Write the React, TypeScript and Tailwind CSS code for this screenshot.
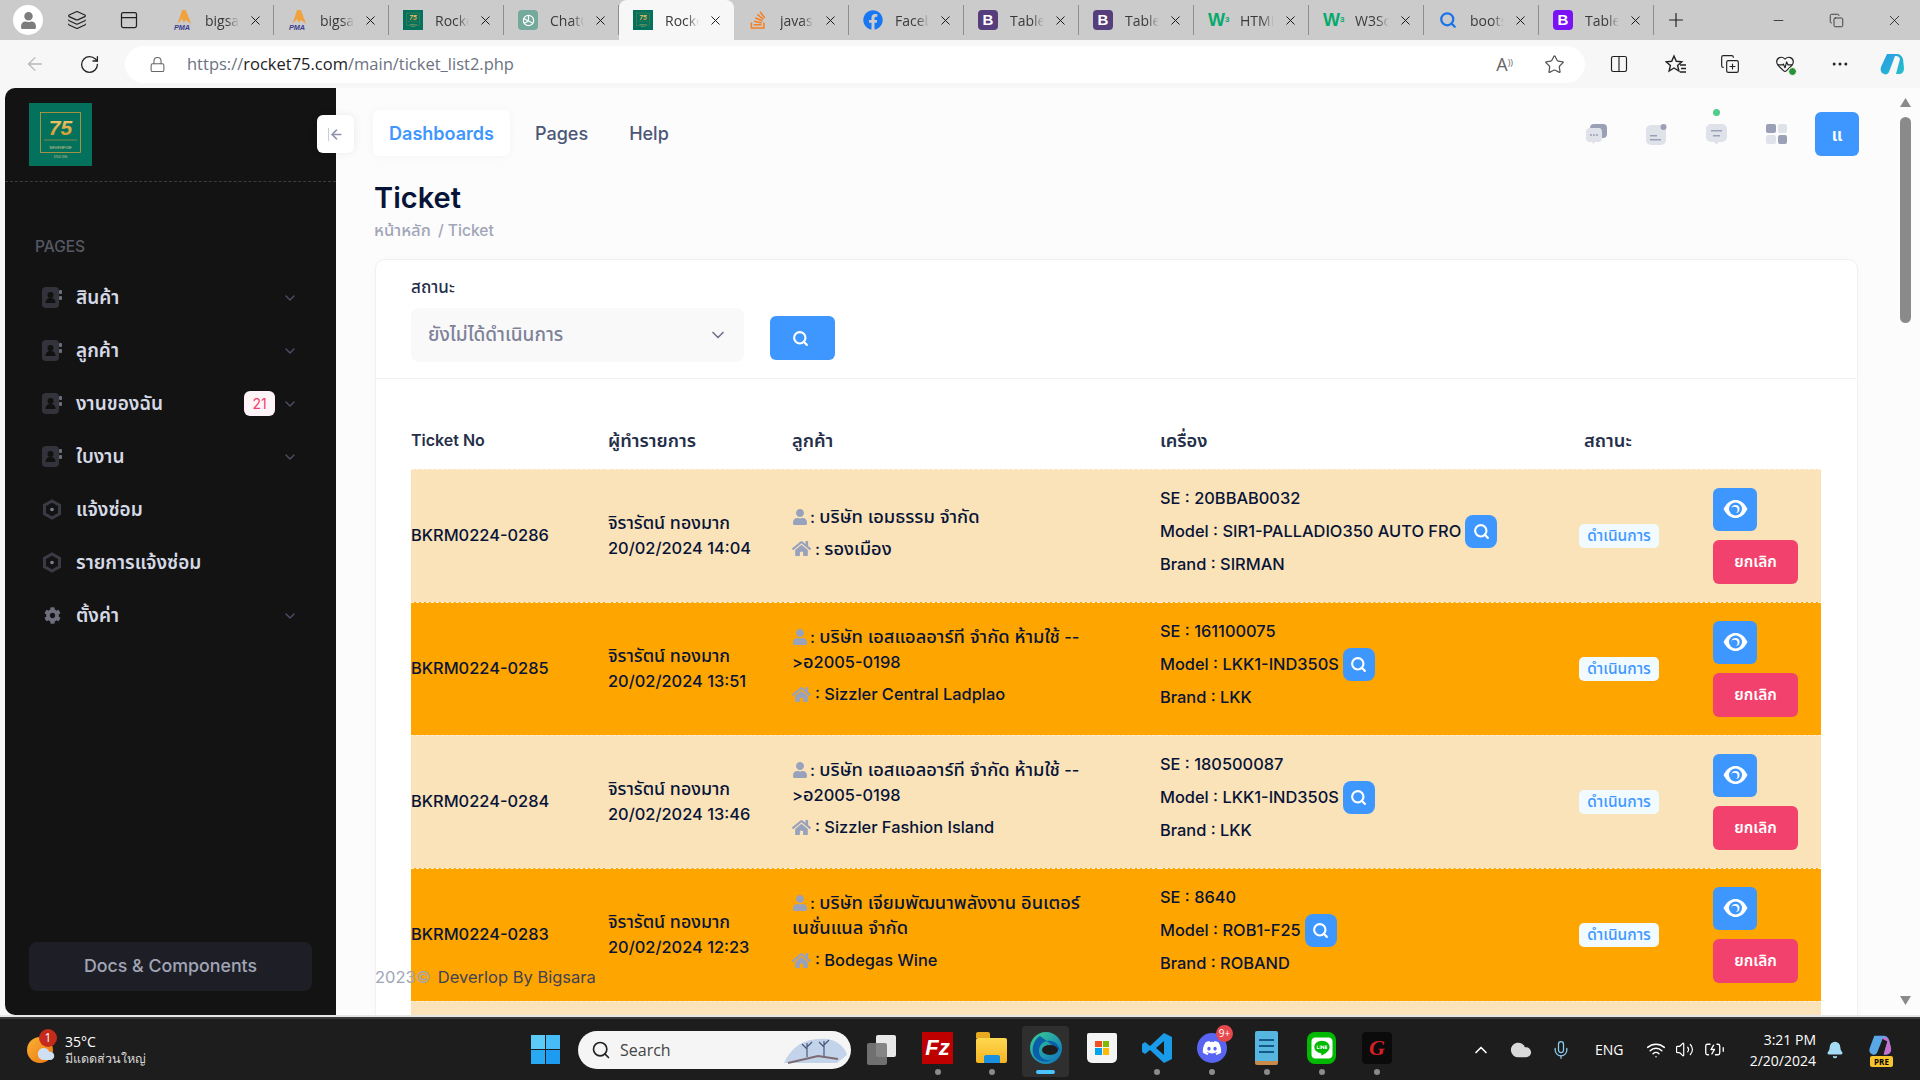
import React from "react";
import { ArrowLeft, RotateCw, Lock, Star, Columns2, Copy, CopyPlus, X, Plus, Minus, MoreHorizontal, ChevronDown, Search, ChevronUp, Mic, Wifi, Volume2, BatteryCharging, Bell, Cloud, HeartPulse, Layers, PanelTop } from "lucide-react";
import { FaFacebook, FaDiscord, FaLine, FaStackOverflow, FaUser, FaHome, FaCog } from "react-icons/fa";

const thai = "font-['Inter','Noto_Sans_Thai','Noto_Sans','DejaVu_Sans',sans-serif]";

function Pma() {
  return (
    <svg width="22" height="24" viewBox="0 0 22 24">
      <path d="M10 1 L14 1 L20 16 L14 12 L12 15 L10 11 L5 16 Z" fill="#f0a23c" />
      <text x="1" y="23" fontSize="8" fontStyle="italic" fontWeight="700" fill="#3a3f8f" fontFamily="Liberation Sans">PMA</text>
    </svg>
  );
}
function Logo75({ size }: { size: number }) {
  return (
    <svg width={size} height={size} viewBox="0 0 63 63" className="shrink-0">
      <defs>
        <linearGradient id="gold" x1="0" y1="0" x2="0" y2="1">
          <stop offset="0" stopColor="#f5d27a" />
          <stop offset="1" stopColor="#d08f25" />
        </linearGradient>
      </defs>
      <rect width="63" height="63" fill="#04715c" />
      <rect x="11.500" y="9.500" width="40" height="40" fill="none" stroke="#c99a3e" strokeWidth="0.8" />
      <text x="31.500" y="32" textAnchor="middle" fontSize="21" fontStyle="italic" fontWeight="700" fill="url(#gold)" fontFamily="Liberation Sans">75</text>
      <line x1="15" y1="37" x2="48" y2="37" stroke="#c99a3e" strokeWidth="0.6" />
      <text x="31.500" y="46" textAnchor="middle" fontSize="4" fill="#d8c88f" fontFamily="Liberation Sans">SEVENFIVE</text>
      <text x="31.500" y="55" textAnchor="middle" fontSize="2.600" fill="#d8c88f" fontFamily="Liberation Sans">STUD 1990</text>
    </svg>
  );
}
function BootB({ color }: { color: string }) {
  return (
    <span className="w-[20px] h-[20px] rounded-[4px] flex items-center justify-center text-white text-[15px] font-bold font-['Liberation_Sans']" style={{ background: color }}>B</span>
  );
}
function W3() {
  return <span className="text-[#04aa6d] text-[18px] font-bold font-['Liberation_Sans'] w-[20px] leading-none">W<sup className="text-[8px]">3</sup></span>;
}
function ChatLogo() {
  return (
    <span className="w-[20px] h-[20px] rounded-[4px] bg-[#74aa9c] flex items-center justify-center">
      <svg width="15" height="15" viewBox="0 0 16 16" fill="none" stroke="#fff" strokeWidth="1.300">
        <circle cx="8" cy="8" r="5.500" />
        <path d="M8 2.500v6l4.500 2.500M8 8.500l-4.500 2.500M3 6l5 2.500" />
      </svg>
    </span>
  );
}

type TabDef = { icon: React.ReactNode; label: string; active?: boolean };
const tabs: TabDef[] = [
  { icon: <Pma />, label: "bigsa" },
  { icon: <Pma />, label: "bigsa" },
  { icon: <Logo75 size={20} />, label: "Rocke" },
  { icon: <ChatLogo />, label: "ChatG" },
  { icon: <Logo75 size={20} />, label: "Rocke", active: true },
  { icon: <FaStackOverflow size={20} color="#f48024" />, label: "javas" },
  { icon: <FaFacebook size={20} color="#1877f2" />, label: "Faceb" },
  { icon: <BootB color="#563d7c" />, label: "Table" },
  { icon: <BootB color="#563d7c" />, label: "Table" },
  { icon: <W3 />, label: "HTML" },
  { icon: <W3 />, label: "W3Sc" },
  { icon: <Search size={18} color="#1a73e8" strokeWidth={3} />, label: "boots" },
  { icon: <BootB color="#7a12f5" />, label: "Table" },
];

function TabBar() {
  return (
    <div className="h-[40px] bg-[#cbcbcb] flex items-center font-['Open_Sans',sans-serif] text-[14px] text-[#3a3a3a] shrink-0">
      <div className="w-[159px] flex items-center shrink-0 pl-[13px]">
        <span className="w-[30px] h-[30px] rounded-full bg-white flex items-center justify-center">
          <FaUser size={17} color="#7d7d7d" />
        </span>
        <Layers size={20} strokeWidth={1.400} color="#222" className="ml-[24px]" />
        <PanelTop size={20} strokeWidth={1.500} color="#222" className="ml-[32px]" />
      </div>
      {tabs.map((t, i) => (
        <div
          key={i}
          className={
            t.active
              ? "w-[115px] h-[40px] bg-[#f7f7f7] rounded-t-[8px] flex items-center pl-[14px] shrink-0"
              : "w-[115px] h-[30px] border-r border-[#8e8e8e] flex items-center pl-[14px] shrink-0"
          }
        >
          <span className="w-[20px] h-[24px] flex items-center justify-center shrink-0">{t.icon}</span>
          <span className="ml-[12px] w-[34px] overflow-hidden whitespace-nowrap [mask-image:linear-gradient(to_right,black_65%,transparent)]">{t.label}</span>
          <X size={15} color="#111" strokeWidth={1.500} className="ml-[9px] shrink-0" />
        </div>
      ))}
      <Plus size={22} color="#222" strokeWidth={1.300} className="ml-[11px]" />
      <div className="ml-auto flex items-center pr-[17px]">
        <Minus size={15} color="#222" strokeWidth={1.300} />
        <Copy size={15} color="#222" strokeWidth={1.300} className="ml-[43px]" />
        <X size={17} color="#222" strokeWidth={1.200} className="ml-[42px]" />
      </div>
    </div>
  );
}

function Toolbar() {
  return (
    <div className="h-[48px] bg-[#f7f7f7] flex items-center shrink-0 text-[#222]">
      <ArrowLeft size={22} color="#b8b8b8" strokeWidth={1.400} className="ml-[24px]" />
      <RotateCw size={21} strokeWidth={1.500} className="ml-[33px]" />
      <div className="ml-[25px] w-[1460px] h-[37px] rounded-full bg-white flex items-center pl-[24px] pr-[20px]">
        <Lock size={17} color="#666" strokeWidth={1.500} />
        <span className="ml-[21px] font-['Open_Sans',sans-serif] text-[16.500px] text-[#6b7280]">
          https://<span className="text-[#222]">rocket75.com</span>/main/ticket_list2.php
        </span>
        <span className="ml-auto text-[18px] text-[#666] font-['Open_Sans'] mr-[31px]">A<sup className="text-[9px]">))</sup></span>
        <Star size={21} color="#555" strokeWidth={1.400} />
      </div>
      <Columns2 size={20} strokeWidth={1.400} className="ml-[24px]" />
      <svg width="22" height="21" viewBox="0 0 22 21" fill="none" stroke="#222" strokeWidth="1.400" className="ml-[36px]">
        <path d="M9 2l2.300 5.300 5.500.5-4.200 3.700 1.300 5.500L9 14l-4.900 3 1.300-5.500L1.200 7.800l5.500-.5z" />
        <path d="M15 11h6M16 14.500h5M15 18h6" />
      </svg>
      <CopyPlus size={20} strokeWidth={1.400} className="ml-[33px]" />
      <span className="relative ml-[35px] flex">
        <HeartPulse size={20} strokeWidth={1.400} />
        <span className="absolute right-[-2px] bottom-[-2px] w-[9px] h-[9px] rounded-full bg-[#2c8f3a] border border-white" />
      </span>
      <MoreHorizontal size={20} strokeWidth={1.600} className="ml-[35px]" />
      <svg width="30" height="30" viewBox="0 0 30 30" className="ml-[27px]">
        <defs>
          <linearGradient id="cop" x1="0" y1="0" x2="1" y2="1">
            <stop offset="0" stopColor="#2b9ae8" />
            <stop offset="1" stopColor="#22c2c8" />
          </linearGradient>
        </defs>
        <path d="M10 5h10c3 0 5 2 6 5l1 9c0 4-2 6-5 6h-3l4-15c-1-3-3-3-5-3l-6 16c-1 2-3 3-5 2-3-1-4-4-3-7z" fill="url(#cop)" />
      </svg>
    </div>
  );
}

function AddressBook() {
  return (
    <svg width="20" height="21" viewBox="0 0 20 21" className="shrink-0">
      <rect x="0" y="0" width="17" height="21" rx="4" fill="#32333b" />
      <rect x="17" y="3" width="3" height="4" rx="1" fill="#6d6e7a" />
      <rect x="17" y="9" width="3" height="4" rx="1" fill="#6d6e7a" />
      <circle cx="8.500" cy="8" r="3" fill="#111" />
      <path d="M3.500 16c0-3 2-5 5-5s5 2 5 5z" fill="#111" />
    </svg>
  );
}
function Hexa() {
  return (
    <svg width="20" height="21" viewBox="0 0 20 21" className="shrink-0">
      <path d="M10 2l7.500 4.200v8.600L10 19l-7.500-4.200V6.200z" fill="none" stroke="#3a3b44" strokeWidth="3" />
      <circle cx="10" cy="10.500" r="1.800" fill="#7d7f8c" />
    </svg>
  );
}

function NavItem({ icon, label, chev, badge }: { icon: React.ReactNode; label: string; chev?: boolean; badge?: string }) {
  return (
    <div className="h-[53px] flex items-center pl-[37px] pr-[39px]">
      <span className="w-[20px] flex justify-center">{icon}</span>
      <span className="ml-[14px] mt-[1px] text-[19px] font-semibold text-[#d5d9e6] leading-[24px]">{label}</span>
      <div className="ml-auto flex items-center">
        {badge && <span className="w-[31px] h-[25px] rounded-[6px] bg-[#fff5f8] text-[#f1416c] text-[14px] flex items-center justify-center mr-[7px]">{badge}</span>}
        {chev && <ChevronDown size={16} color="#4b5068" strokeWidth={2} className="mr-[-1px]" />}
      </div>
    </div>
  );
}

function Sidebar() {
  return (
    <aside className={`w-[331px] shrink-0 bg-[#131313] rounded-l-[10px] flex flex-col relative z-10 ${thai}`}>
      <div className="h-[94px] border-b border-dashed border-[#3c3c3c] pl-[24px] pt-[15px]">
        <Logo75 size={63} />
      </div>
      <div className="pt-[56px] pl-[30px] text-[15.500px] font-medium text-[#565863] leading-[17px]">PAGES</div>
      <div className="mt-[16px] flex flex-col">
        <NavItem icon={<AddressBook />} label="สินค้า" chev />
        <NavItem icon={<AddressBook />} label="ลูกค้า" chev />
        <NavItem icon={<AddressBook />} label="งานของฉัน" chev badge="21" />
        <NavItem icon={<AddressBook />} label="ใบงาน" chev />
        <NavItem icon={<Hexa />} label="แจ้งซ่อม" />
        <NavItem icon={<Hexa />} label="รายการแจ้งซ่อม" />
        <NavItem icon={<FaCog size={17} color="#6d6f7c" />} label="ตั้งค่า" chev />
      </div>
      <div className="mt-auto mb-[24px] mx-[24px] h-[49px] rounded-[8px] bg-[#1e1f26] text-[#a1a5b7] text-[17.800px] font-medium flex items-center justify-center">
        Docs &amp; Components
      </div>
      <div className="absolute right-[-18px] top-[27px] w-[37px] h-[38px] bg-white rounded-[6px] shadow-[0_0_8px_rgba(0,0,0,0.08)] flex items-center justify-center">
        <span className="w-[1px] h-[13px] bg-[#c9cddb]" />
        <ArrowLeft size={15} color="#8f94ad" strokeWidth={2.500} />
      </div>
    </aside>
  );
}

function HeaderIcons() {
  return (
    <div className="ml-auto flex items-center pr-[41px]">
      <svg width="21" height="20" viewBox="0 0 21 20" className="mr-[39px]">
        <rect x="4" y="0" width="17" height="14" rx="4" fill="#9aa1b7" />
        <path d="M4 4h10a4 4 0 0 1 2 4v6a4 4 0 0 1-4 4H9l-1.500 2L6 18H4a4 4 0 0 1-4-4V8a4 4 0 0 1 4-4z" fill="#e0e2ea" />
        <circle cx="5" cy="11" r="1" fill="#9aa1b7" /><circle cx="8" cy="11" r="1" fill="#9aa1b7" /><circle cx="11" cy="11" r="1" fill="#9aa1b7" />
      </svg>
      <svg width="21" height="21" viewBox="0 0 21 21" className="mr-[39px]">
        <rect x="0" y="1" width="20" height="20" rx="5" fill="#e0e2ea" />
        <circle cx="17.500" cy="3" r="3" fill="#9aa1b7" />
        <rect x="4" y="11" width="7" height="1.500" fill="#9aa1b7" /><rect x="4" y="15" width="11" height="1.500" fill="#9aa1b7" />
      </svg>
      <span className="relative mr-[39px] flex">
        <svg width="21" height="21" viewBox="0 0 21 21">
          <path d="M5 0h11a5 5 0 0 1 5 5v8a5 5 0 0 1-5 5h-3l-2.500 2.500L8 18H5a5 5 0 0 1-5-5V5a5 5 0 0 1 5-5z" fill="#e0e2ea" />
          <rect x="5" y="6" width="11" height="1.500" fill="#9aa1b7" /><rect x="7" y="11" width="7" height="1.500" fill="#9aa1b7" />
        </svg>
        <span className="absolute left-[7px] top-[-15px] w-[7px] h-[7px] rounded-full bg-[#50cd89]" />
      </span>
      <span className="grid grid-cols-2 gap-[2px] w-[21px] mr-[28px]">
        <span className="h-[9px] rounded-[2px] bg-[#9aa1b7]" />
        <span className="h-[9px] rounded-[2px] bg-[#e0e2ea]" />
        <span className="h-[9px] rounded-[2px] bg-[#e0e2ea]" />
        <span className="h-[9px] rounded-[2px] bg-[#9aa1b7]" />
      </span>
      <span className="w-[44px] h-[44px] rounded-[6px] bg-[#3e97ff] text-white font-semibold text-[18px] flex items-center justify-center">แ</span>
    </div>
  );
}

function T({ children }: { children: React.ReactNode }) {
  return <span className="text-[18.300px] leading-[20px]">{children}</span>;
}

type Row = { id: string; date: string; cust: React.ReactNode; site: React.ReactNode; se: string; model: string; brand: string; dark: boolean };
const slr = <><T>บริษัท เอสแอลอาร์ที จำกัด ห้ามใช้</T> --&gt;<T>อ</T>2005-0198</>;
const rows: Row[] = [
  { id: "BKRM0224-0286", date: "20/02/2024 14:04", cust: <T>บริษัท เอมธรรม จำกัด</T>, site: <T>รองเมือง</T>, se: "20BBAB0032", model: "SIR1-PALLADIO350 AUTO FRO", brand: "SIRMAN", dark: false },
  { id: "BKRM0224-0285", date: "20/02/2024 13:51", cust: slr, site: "Sizzler Central Ladplao", se: "161100075", model: "LKK1-IND350S", brand: "LKK", dark: true },
  { id: "BKRM0224-0284", date: "20/02/2024 13:46", cust: slr, site: "Sizzler Fashion Island", se: "180500087", model: "LKK1-IND350S", brand: "LKK", dark: false },
  { id: "BKRM0224-0283", date: "20/02/2024 12:23", cust: <T>บริษัท เจียมพัฒนาพลังงาน อินเตอร์เนชั่นแนล จำกัด</T>, site: "Bodegas Wine", se: "8640", model: "ROB1-F25", brand: "ROBAND", dark: true },
];

function EyeIcon() {
  return (
    <svg width="25" height="20" viewBox="0 0 25 20">
      <path d="M0.500 10C4 3.500 8 1 12.500 1S21 3.500 24.500 10C21 16.500 17 19 12.500 19S4 16.500 0.500 10Z" fill="#fff" />
      <circle cx="12.500" cy="10" r="6.500" fill="#3e97ff" />
      <circle cx="12.500" cy="10" r="4" fill="#fff" />
      <circle cx="11.300" cy="11" r="3.300" fill="#3e97ff" />
    </svg>
  );
}

function TicketRow({ r }: { r: Row }) {
  return (
    <tr className={`h-[133px] border-t border-dashed border-[#fdf0d8] ${r.dark ? "bg-[#ffa500]" : "bg-[#fae2b9]"}`}>
      <td className="align-middle text-[16.400px] font-medium">{r.id}</td>
      <td className="align-middle text-[16.400px] font-medium leading-[25px]">
        <span className="text-[17.800px] leading-[20px]">จิรารัตน์ ทองมาก</span>
        <br />
        {r.date}
      </td>
      <td className="align-middle pr-[60px] pb-[5px] text-[16.400px] font-medium leading-[25px]">
        <div>
          <FaUser size={16} color="#98a2bd" className="inline mr-[2px] mb-[3px]" />: {r.cust}
        </div>
        <div className="mt-[7px]">
          <FaHome size={19} color="#98a2bd" className="inline mr-[4px] mb-[3px]" />: {r.site}
        </div>
      </td>
      <td className="align-middle pb-[9px] text-[16.400px] font-medium">
        <div className="leading-[25px]">SE : {r.se}</div>
        <div className="leading-[33px] flex items-center my-[4px] whitespace-nowrap">
          Model : {r.model}
          <span className="ml-[4px] w-[32px] h-[33px] rounded-[8px] bg-[#3e97ff] flex items-center justify-center">
            <Search size={17} color="#fff" strokeWidth={3} />
          </span>
        </div>
        <div className="leading-[25px]">Brand : {r.brand}</div>
      </td>
      <td className="align-middle">
        <span className="inline-flex w-[80px] h-[24px] rounded-[5px] bg-[#f1faff] text-[#3e97ff] text-[15.500px] font-medium items-center justify-center ml-[-5px] overflow-visible whitespace-nowrap">ดำเนินการ</span>
      </td>
      <td className="align-middle">
        <span className="w-[44px] h-[43px] rounded-[6px] bg-[#3e97ff] flex items-center justify-center">
          <EyeIcon />
        </span>
        <span className="mt-[9px] w-[85px] h-[44px] rounded-[6px] bg-[#f1416c] text-white text-[15.500px] font-semibold flex items-center justify-center">ยกเลิก</span>
      </td>
    </tr>
  );
}

function Main() {
  return (
    <main className={`flex-1 bg-[#fcfcfc] relative overflow-hidden text-[#071437] ${thai}`}>
      <div className="h-[108px] pl-[37px] pt-[22px] flex items-start">
        <span className="w-[137px] h-[46px] bg-white rounded-[6px] shadow-[0_0_10px_rgba(0,0,0,0.04)] text-[#3e97ff] text-[18px] font-semibold flex items-center justify-center">Dashboards</span>
        <span className="ml-[25px] h-[46px] text-[18px] font-medium text-[#4b5675] flex items-center">Pages</span>
        <span className="ml-[41px] h-[46px] text-[18px] font-medium text-[#4b5675] flex items-center">Help</span>
        <div className="ml-auto h-[44px] mt-[2px] flex items-center">
          <HeaderIcons />
        </div>
      </div>
      <div className="pl-[38px]">
        <h1 className="text-[29px] font-semibold leading-[28px] -mt-[12px]">Ticket</h1>
        <div className="mt-[8px] text-[15.600px] font-medium text-[#a1a5b7] leading-[20px]">
          <span className="text-[16.600px]">หน้าหลัก</span> <span className="ml-[3px]">/ Ticket</span>
        </div>
      </div>
      <section className="mt-[18px] ml-[39px] w-[1483px] bg-white rounded-t-[10px] border border-[#f1f1f4] shadow-[0_0_8px_rgba(0,0,0,0.02)]">
        <div className="h-[119px] border-b border-[#f1f1f4] pl-[35px] pt-[16px]">
          <div className="text-[17px] font-medium text-[#252f4a] leading-[22px]">สถานะ</div>
          <div className="mt-[10px] flex items-start">
            <div className="w-[333px] h-[54px] rounded-[8px] bg-[#f9f9f9] flex items-center pl-[17px] pr-[16px] text-[19px] font-medium text-[#7e8299]">
              ยังไม่ได้ดำเนินการ
              <ChevronDown size={20} color="#6f7489" strokeWidth={2} className="ml-auto" />
            </div>
            <span className="ml-[26px] mt-[8px] w-[65px] h-[44px] rounded-[6px] bg-[#3e97ff] flex items-center justify-center pr-[5px]">
              <Search size={17} color="#fff" strokeWidth={3} />
            </span>
          </div>
        </div>
        <div className="px-[35px] pt-[40px]">
          <table className="w-[1410px] table-fixed border-collapse text-left">
            <colgroup>
              <col className="w-[197px]" />
              <col className="w-[184px]" />
              <col className="w-[368px]" />
              <col className="w-[424px]" />
              <col className="w-[129px]" />
              <col className="w-[108px]" />
            </colgroup>
            <thead>
              <tr className="h-[50px] align-top text-[16px] font-semibold text-[#252f4a] leading-[24px]">
                <th className="font-semibold pt-[9px]">Ticket No</th>
                <th className="font-semibold pt-[9px] text-[18.300px]">ผู้ทำรายการ</th>
                <th className="font-semibold pt-[9px] text-[18.300px]">ลูกค้า</th>
                <th className="font-semibold pt-[9px] text-[18.300px]">เครื่อง</th>
                <th className="font-semibold pt-[9px] text-[18.300px]">สถานะ</th>
                <th />
              </tr>
            </thead>
            <tbody>
              {rows.map((r) => (
                <TicketRow key={r.id} r={r} />
              ))}
              <tr className="h-[133px] bg-[#fae2b9] border-t border-dashed border-[#fdf0d8]">
                <td colSpan={6} />
              </tr>
            </tbody>
          </table>
        </div>
      </section>
      <div className="absolute left-[39px] top-[878px] text-[16.500px] font-normal text-[#a1a5b7] leading-[22px]">
        2023©<span className="ml-[7px] text-[#3f4254]">Deverlop By Bigsara</span>
      </div>
    </main>
  );
}

function ScrollBar() {
  return (
    <div className="w-[20px] shrink-0 bg-[#fcfcfc] flex flex-col items-start">
      <svg width="11" height="9" viewBox="0 0 11 9" className="mt-[10px]"><path d="M5.500 0L11 9H0z" fill="#8a8a8a" /></svg>
      <div className="mt-[10px] w-[11px] h-[206px] rounded-full bg-[#8a8a8a]" />
      <svg width="11" height="9" viewBox="0 0 11 9" className="mt-auto mb-[10px]"><path d="M5.500 9L11 0H0z" fill="#8a8a8a" /></svg>
    </div>
  );
}

function Dot({ on }: { on?: boolean }) {
  return <span className={on ? "block w-[19px] h-[4px] rounded-full bg-[#4cc2ff] mt-[3px]" : "block w-[6px] h-[6px] rounded-full bg-[#8b8b8b] mt-[2px]"} />;
}

function TaskIcon({ w, ml, on, dot, children }: { w: number; ml: string; on?: boolean; dot?: boolean; children: React.ReactNode }) {
  return (
    <div className={`${ml} mt-[4px] flex flex-col items-center shrink-0 ${on ? "bg-[#2f2f2f] rounded-[4px] py-[3px]" : ""}`} style={{ width: w }}>
      <div className="h-[38px] flex items-center justify-center">{children}</div>
      {(dot || on) ? <Dot on={on} /> : <span className="h-[6px] mt-[2px]" />}
    </div>
  );
}

function Taskbar() {
  return (
    <div className="h-[63px] bg-[#1d1d1d] border-t-2 border-[#3a3a3a] flex items-center shrink-0 text-white font-['Open_Sans',sans-serif] relative">
      <span className="ml-[27px] relative w-[28px] h-[34px] flex items-center">
        <span className="w-[26px] h-[26px] rounded-full bg-gradient-to-br from-[#f8b133] to-[#ee7410]" />
        <Cloud size={18} fill="#cfe0f2" color="#cfe0f2" className="absolute left-[10px] bottom-[4px]" />
        <span className="absolute left-[12px] top-[-4px] w-[18px] h-[18px] rounded-full bg-[#c42b1c] text-[12px] flex items-center justify-center">1</span>
      </span>
      <div className="ml-[10px] flex flex-col">
        <span className="text-[14px] leading-[17px]">35°C</span>
        <span className="text-[12.500px] leading-[17px] text-[#d8d8d8]">มีแดดส่วนใหญ่</span>
      </div>
      <div className="ml-[385px] grid grid-cols-2 gap-[1px] w-[29px] shrink-0">
        <span className="h-[14px] bg-[#5ccbfa]" /><span className="h-[14px] bg-[#46bdf8]" />
        <span className="h-[14px] bg-[#2aa9f3]" /><span className="h-[14px] bg-[#1c9bf0]" />
      </div>
      <div className="ml-[18px] w-[273px] h-[38px] rounded-full bg-[#f5f5f5] flex items-center pl-[13px] text-[#444] text-[16px] shrink-0 overflow-hidden">
        <Search size={20} color="#222" strokeWidth={2} />
        <span className="ml-[9px]">Search</span>
        <svg width="66" height="30" viewBox="0 0 66 30" className="ml-auto mr-[3px]">
          <path d="M2 28C10 10 25 2 45 4c10 1 18 8 20 16l-10 8z" fill="#c3d4ea" />
          <path d="M25 22V8M25 14l-5-5M25 12l5-5M42 22V6M42 12l-5-5M42 10l5-5" stroke="#4a5778" strokeWidth="1.200" fill="none" />
          <path d="M6 28l30-7 20 3" stroke="#7b6a72" strokeWidth="2" fill="none" />
        </svg>
      </div>
      <div className="ml-[16px] relative w-[29px] h-[30px] shrink-0">
        <span className="absolute right-0 top-0 w-[20px] h-[22px] bg-[#e8e8e8] rounded-[2px]" />
        <span className="absolute left-0 bottom-0 w-[20px] h-[22px] bg-[#7a7a7a]/90 rounded-[2px]" />
      </div>
      <TaskIcon w={31} ml="ml-[26px]" dot>
        <span className="w-[31px] h-[32px] bg-[#bf0000] text-white font-bold italic text-[22px] flex items-center justify-center font-['Liberation_Sans']">Fz</span>
      </TaskIcon>
      <TaskIcon w={31} ml="ml-[23px]" dot>
        <span className="flex flex-col w-[31px] h-[31px]">
          <span className="h-[6px] w-[14px] bg-[#e8a81f] rounded-t-[2px]" />
          <span className="flex-1 bg-gradient-to-b from-[#ffd84f] to-[#f5b520] flex items-end justify-center rounded-[2px]">
            <span className="w-[16px] h-[8px] bg-[#1b8fe0] rounded-t-[2px]" />
          </span>
        </span>
      </TaskIcon>
      <TaskIcon w={47} ml="ml-[15px]" on>
        <svg width="32" height="32" viewBox="0 0 32 32">
          <defs>
            <linearGradient id="edge" x1="0" y1="0" x2="1" y2="1"><stop offset="0" stopColor="#3bd08f" /><stop offset="1" stopColor="#0c6ec4" /></linearGradient>
          </defs>
          <circle cx="16" cy="16" r="16" fill="url(#edge)" />
          <path d="M30 19c-1-7-6-11-13-10-5 1-8 5-8 10 0 6 5 10 12 9-5 3-13 2-17-4C1 18 3 8 10 4" fill="#0a5fa8" />
          <ellipse cx="20" cy="18" rx="8" ry="5" fill="#1d1d1d" />
        </svg>
      </TaskIcon>
      <TaskIcon w={30} ml="ml-[18px]">
        <span className="w-[30px] h-[30px] bg-[#f4f4f4] rounded-b-[5px] rounded-t-[2px] grid grid-cols-2 gap-[1px] p-[8px]">
          <span className="bg-[#f25022]" /><span className="bg-[#7fba00]" /><span className="bg-[#00a4ef]" /><span className="bg-[#ffb900]" />
        </span>
      </TaskIcon>
      <TaskIcon w={32} ml="ml-[24px]" dot>
        <svg width="32" height="32" viewBox="0 0 32 32">
          <path d="M23 1l8 4v22l-8 4L9 18l-5 4-3-2v-8l3-2 5 4z M23 9l-8 7 8 7z" fill="#1a9be8" fillRule="evenodd" />
        </svg>
      </TaskIcon>
      <TaskIcon w={30} ml="ml-[24px]" dot>
        <span className="relative w-[30px] h-[30px] rounded-full bg-[#5865f2] flex items-center justify-center">
          <FaDiscord size={20} color="#fff" />
          <span className="absolute right-[-6px] top-[-8px] w-[17px] h-[17px] rounded-full bg-[#e5484d] text-[10px] flex items-center justify-center">9+</span>
        </span>
      </TaskIcon>
      <TaskIcon w={23} ml="ml-[28px]" dot>
        <span className="w-[23px] h-[34px] bg-[#57b6e0] rounded-[2px] flex flex-col justify-center gap-[4px] px-[4px] border-b-[4px] border-[#c98a4b]">
          <span className="h-[2px] bg-[#155a86]" /><span className="h-[2px] bg-[#155a86]" /><span className="h-[2px] bg-[#155a86]" />
        </span>
      </TaskIcon>
      <TaskIcon w={29} ml="ml-[29px]" dot>
        <span className="w-[29px] h-[32px] rounded-[8px] bg-[#00b900] flex items-center justify-center">
          <FaLine size={24} color="#fff" />
        </span>
      </TaskIcon>
      <TaskIcon w={30} ml="ml-[26px]" dot>
        <span className="w-[30px] h-[32px] rounded-[4px] bg-[#0b0b0b] text-[#d81f26] text-[22px] font-bold italic flex items-center justify-center font-['Liberation_Serif']">G</span>
      </TaskIcon>
      <ChevronUp size={20} color="#fff" strokeWidth={2} className="ml-[79px] shrink-0" />
      <Cloud size={22} fill="#d9d9d9" color="#d9d9d9" className="ml-[19px] shrink-0" />
      <Mic size={20} color="#8ad0f0" strokeWidth={1.500} className="ml-[19px] shrink-0" />
      <span className="ml-[24px] text-[14px]">ENG</span>
      <Wifi size={20} color="#fff" strokeWidth={1.800} className="ml-[22px] shrink-0" />
      <Volume2 size={19} color="#fff" strokeWidth={1.500} className="ml-[9px] shrink-0" />
      <BatteryCharging size={21} color="#fff" strokeWidth={1.500} className="ml-[10px] shrink-0" />
      <div className="ml-auto mr-[10px] flex flex-col items-end text-[14px] leading-[21px]">
        <span>3:21 PM</span>
        <span>2/20/2024</span>
      </div>
      <Bell size={18} fill="#a5dcf5" color="#a5dcf5" className="shrink-0 mr-[20px]" />
      <span className="relative w-[30px] h-[34px] mr-[26px] shrink-0">
        <svg width="30" height="28" viewBox="0 0 30 30">
          <path d="M10 3h10c3 0 5 2 6 5l2 9c0 4-2 6-5 6h-3l4-14c-1-3-3-3-5-3l-6 15c-1 2-3 3-5 2-3-1-4-4-3-7z" fill="#5aa7e8" />
          <path d="M18 6c3-3 7-1 8 3l2 8c0 4-2 6-5 6h-3l4-14z" fill="#c86fd0" />
        </svg>
        <span className="absolute left-[6px] bottom-0 w-[23px] h-[11px] rounded-[2px] bg-[#f7c52d] text-black text-[8px] font-bold leading-[11px] text-center">PRE</span>
      </span>
    </div>
  );
}

export default function App() {
  return (
    <div className="w-[1920px] h-[1080px] overflow-hidden flex flex-col bg-[#f7f7f7]">
      <TabBar />
      <Toolbar />
      <div className="flex-1 flex min-h-0 pl-[5px] border-b-2 border-[#e6e6e6]">
        <Sidebar />
        <Main />
        <ScrollBar />
      </div>
      <Taskbar />
    </div>
  );
}
